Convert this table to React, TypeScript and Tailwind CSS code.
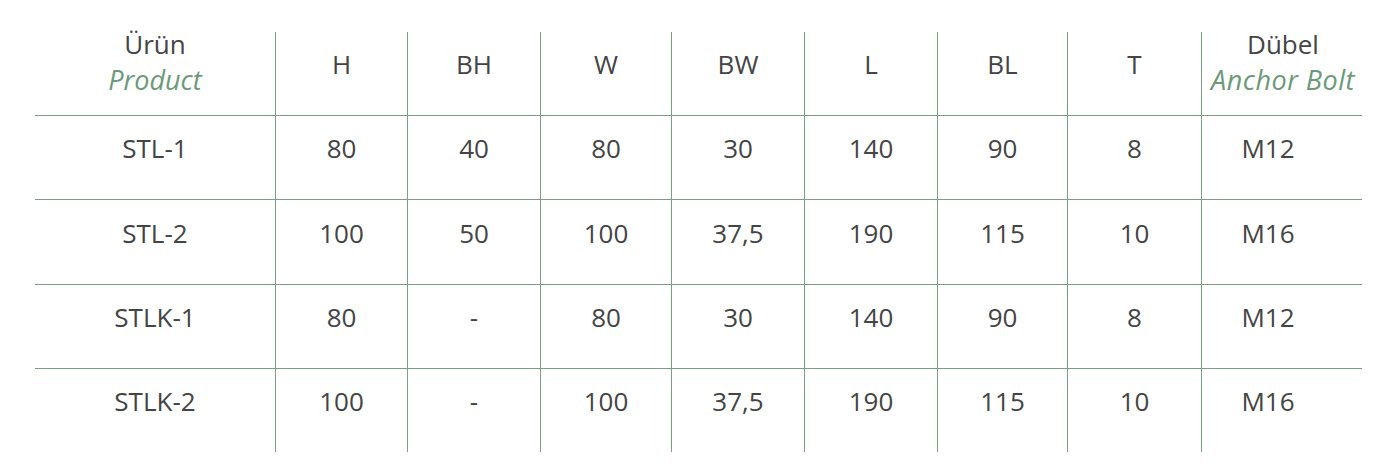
import React from "react";

const cols = ["w-[241px]", "w-[132px]", "w-[133px]", "w-[131px]", "w-[133px]", "w-[133px]", "w-[130px]", "w-[134px]", "w-[160px]"];

const rows = [
  ["STL-1", "80", "40", "80", "30", "140", "90", "8", "M12"],
  ["STL-2", "100", "50", "100", "37,5", "190", "115", "10", "M16"],
  ["STLK-1", "80", "-", "80", "30", "140", "90", "8", "M12"],
  ["STLK-2", "100", "-", "100", "37,5", "190", "115", "10", "M16"],
];

const rowH = ["h-[84px]", "h-[85px]", "h-[84px]", "h-[83px]"];

export default function App() {
  const font = { fontFamily: '"Open Sans", "Noto Sans", sans-serif' };
  return (
    <div className="w-[1397px] h-[470px] bg-white pt-[32px] pl-[35px] text-[#444444]" style={font}>
      <div className="flex flex-col w-[1327px]">
        <div className="flex h-[84px] border-b border-[#7a9e85]">
          <div className={`${cols[0]} shrink-0 border-r border-[#7a9e85] flex flex-col items-center justify-center pb-[24px] text-[26px] leading-[35px]`}>
            <span>Ürün</span>
            <span className="italic text-[#6b9a78] text-[27px]">Product</span>
          </div>
          {["H", "BH", "W", "BW", "L", "BL", "T"].map((h, i) => (
            <div key={h} className={`${cols[i + 1]} shrink-0 border-r border-[#7a9e85] flex items-center justify-center pb-[18px] text-[26px]`}>
              {h}
            </div>
          ))}
          <div className={`${cols[8]} shrink-0 flex flex-col items-center justify-center pb-[24px] text-[26px] leading-[35px] pl-[2px]`}>
            <span>Dübel</span>
            <span className="italic text-[#6b9a78] text-[27px] tracking-[0.5px]">Anchor Bolt</span>
          </div>
        </div>
        {rows.map((r, ri) => (
          <div key={ri} className={`flex ${rowH[ri]} ${ri < 3 ? "border-b border-[#7a9e85]" : ""}`}>
            {r.map((c, ci) => (
              <div
                key={ci}
                className={`${cols[ci]} shrink-0 flex items-center justify-center pb-[18px] text-[26px] ${ci < 8 ? "border-r border-[#7a9e85]" : "pr-[28px]"}`}
              >
                {c}
              </div>
            ))}
          </div>
        ))}
      </div>
    </div>
  );
}
